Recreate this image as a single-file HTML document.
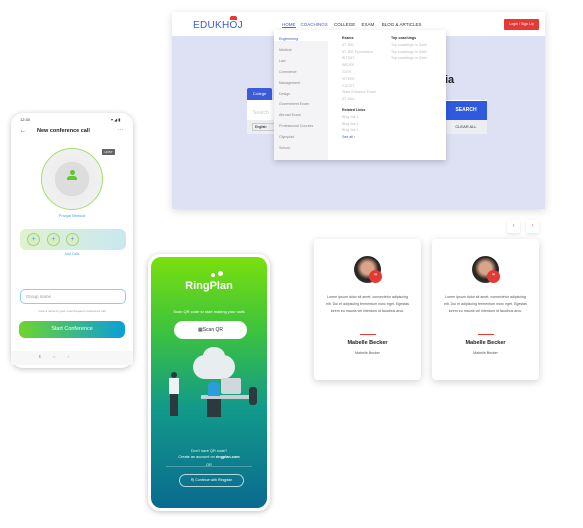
<!DOCTYPE html>
<html><head><meta charset="utf-8"><style>
*{margin:0;padding:0;box-sizing:border-box}
body{width:583px;height:528px;background:#fff;position:relative;overflow:hidden;font-family:"Liberation Sans",sans-serif}
.a{position:absolute}
</style></head><body>

<!-- website -->
<div class="a" style="left:172px;top:12px;width:373px;height:197px;background:#dde1f3;box-shadow:0 2px 8px rgba(0,0,0,.15)">
 <div class="a" style="left:0;top:0;width:373px;height:24px;background:#fff"></div>
 <div class="a" style="left:21px;top:8px;font-size:10px;color:#3b5bd9;letter-spacing:.3px">EDUKHOJ</div>
 <div class="a" style="left:58px;top:4px;width:7px;height:4px;background:#e53935;border-radius:2px 2px 0 0"></div>
 <div class="a" style="left:110px;top:10px;font-size:4.5px;color:#333;white-space:nowrap"><span style="color:#3b5bd9;border-bottom:1px solid #e53935">HOME</span>&nbsp;&nbsp;&nbsp;&nbsp;<span style="color:#3b5bd9">COACHINGS</span>&nbsp;&nbsp;&nbsp;&nbsp;&nbsp;COLLEGE&nbsp;&nbsp;&nbsp;&nbsp;&nbsp;EXAM&nbsp;&nbsp;&nbsp;&nbsp;&nbsp;&nbsp;BLOG &amp; ARTICLES</div>
 <div class="a" style="left:332px;top:7px;width:35px;height:11px;background:#e53935;border-radius:1px;color:#fff;font-size:3.6px;text-align:center;line-height:11px">Login / Sign Up</div>
 <div class="a" style="left:273px;top:62px;font-size:11px;font-weight:bold;color:#222">ia</div>
 <div class="a" style="left:75px;top:76px;width:25px;height:12px;background:#3b5bd9;color:#fff;font-size:4px;line-height:12px;text-align:center;border-radius:2px 2px 0 0">College</div>
 <div class="a" style="left:75px;top:88px;width:240px;height:31px;background:#fff"></div>
 <div class="a" style="left:75px;top:108px;width:240px;height:14px;background:#eceef2"></div>
 <div class="a" style="left:81px;top:98px;font-size:5px;color:#ccc">Search</div>
 <div class="a" style="left:80px;top:111px;width:24px;height:8px;border:1px solid #ccc;font-size:3.5px;line-height:6px;padding-left:2px">English</div>
 <div class="a" style="left:273px;top:89px;width:42px;height:19px;background:#2f5ae0;color:#fff;font-size:5px;font-weight:bold;text-align:center;line-height:19px">SEARCH</div>
 <div class="a" style="left:273px;top:108px;width:42px;height:14px;color:#333;font-size:4px;text-align:center;line-height:14px">CLEAR ALL</div>
 <div class="a" style="left:102px;top:18px;width:172px;height:130px;background:#fff;box-shadow:0 2px 6px rgba(0,0,0,.2)">
  <div class="a" style="left:0;top:0;width:54px;height:130px;background:#f4f4f6"></div>
  <div class="a" style="left:0;top:0;width:54px;height:11px;background:#fff"></div>
  <div class="a" style="left:5px;top:4px;font-size:3.6px;line-height:10.9px;color:#888">
   <div style="color:#3b5bd9">Engineering</div><div>Medical</div><div>Law</div><div>Commerce</div><div>Management</div><div>Design</div><div>Government Exam</div><div>Abroad Exam</div><div>Professional Courses</div><div>Olympiad</div><div>School</div>
  </div>
  <div class="a" style="left:68px;top:5px;font-size:3.6px;line-height:6.8px;color:#bbb"><div style="color:#333;font-weight:bold">Exams</div><div>IIT JEE</div><div>IIT JEE Foundation</div><div>BITSAT</div><div>WBJEE</div><div>GATE</div><div>VITEEE</div><div>CUCET</div><div>State Entrance Exam</div><div>IIT JAM</div><div style="color:#333;font-weight:bold;margin-top:4px">Related Links</div><div>Blog link 1</div><div>Blog link 1</div><div>Blog link 1</div><div style="color:#3b5bd9">See all ›</div></div>
  <div class="a" style="left:117px;top:5px;font-size:3.6px;line-height:6.8px;color:#bbb"><div style="color:#333;font-weight:bold">Top coachings</div><div>Top coachings in Delhi</div><div>Top coachings in Delhi</div><div>Top coachings in Delhi</div></div>
 </div>
</div>

<!-- left phone -->
<div class="a" style="left:11px;top:113px;width:122px;height:255px;background:#fff;border-radius:12px;box-shadow:0 1px 6px rgba(0,0,0,.25)">
 <div class="a" style="left:9px;top:4px;font-size:4px;color:#333">12:30</div>
 <div class="a" style="left:100px;top:4px;font-size:4px;color:#333">▾ ◢ ▮</div>
 <div class="a" style="left:9px;top:15px;font-size:6px;color:#222">←</div>
 <div class="a" style="left:26px;top:15px;font-size:5.5px;font-weight:bold;color:#222">New conference call</div>
 <div class="a" style="left:107px;top:14px;font-size:5px;color:#333">···</div>
 <div class="a" style="left:30px;top:35px;width:62px;height:62px;border-radius:50%;background:radial-gradient(#ddd 40%,#eee 41%,#f3f3f3);border:1px solid #a8dd6a"></div>
 <div class="a" style="left:54px;top:57px;width:14px;height:10px;"><div style="width:5px;height:5px;border-radius:50%;background:#5cc830;margin:0 auto"></div><div style="width:10px;height:4px;border-radius:3px 3px 0 0;background:#5cc830;margin:1px auto 0"></div></div>
 <div class="a" style="left:91px;top:36px;width:13px;height:6px;background:#666;color:#fff;font-size:3px;text-align:center;line-height:6px">HOST</div>
 <div class="a" style="left:0;top:100px;width:122px;text-align:center;font-size:4px;color:#4aa8e0">Pranjal Bhasoli</div>
 <div class="a" style="left:9px;top:116px;width:106px;height:21px;border-radius:6px;background:linear-gradient(90deg,#dff2cf,#c9e7f2)"></div>
 <div class="a" style="left:16px;top:120px;width:13px;height:13px;border-radius:50%;border:1px solid #a6d07c;background:#d8efc6;color:#3fa0d8;font-size:7px;text-align:center;line-height:11px">+</div>
 <div class="a" style="left:36px;top:120px;width:13px;height:13px;border-radius:50%;border:1px solid #a6d07c;background:#d8efc6;color:#3fa0d8;font-size:7px;text-align:center;line-height:11px">+</div>
 <div class="a" style="left:55px;top:120px;width:13px;height:13px;border-radius:50%;border:1px solid #a6d07c;background:#d8efc6;color:#3fa0d8;font-size:7px;text-align:center;line-height:11px">+</div>
 <div class="a" style="left:0;top:139px;width:122px;text-align:center;font-size:3.5px;color:#4aa8e0">Add Calls</div>
 <div class="a" style="left:9px;top:176px;width:106px;height:15px;border:1px solid #8fd0e8;border-radius:5px;font-size:4.5px;color:#999;padding:4px 5px">Group name</div>
 <div class="a" style="left:0;top:196px;width:122px;text-align:center;font-size:3px;color:#999">Give a name to your most frequent conference call</div>
 <div class="a" style="left:8px;top:208px;width:106px;height:17px;border-radius:6px;background:linear-gradient(90deg,#6ed42f,#0a9fd6);color:#fff;font-size:5.5px;text-align:center;line-height:17px">Start Conference</div>
 <div class="a" style="left:0;top:238px;width:122px;height:14px;background:#f7f7f7"></div>
 <div class="a" style="left:28px;top:241px;font-size:4px;color:#888">⦀&nbsp;&nbsp;&nbsp;&nbsp;&nbsp;&nbsp;&nbsp;&nbsp;&nbsp;&nbsp;&nbsp;○&nbsp;&nbsp;&nbsp;&nbsp;&nbsp;&nbsp;&nbsp;&nbsp;&nbsp;&nbsp;&nbsp;‹</div>
</div>

<!-- ringplan phone -->
<div class="a" style="left:148px;top:254px;width:122px;height:257px;background:#fff;border-radius:12px;box-shadow:0 1px 6px rgba(0,0,0,.25)">
 <div class="a" style="left:3px;top:3px;width:116px;height:251px;border-radius:10px;background:linear-gradient(180deg,#7ae00d 0%,#3cc23f 30%,#129a8a 60%,#0a6a8f 100%)">
  <div class="a" style="left:0;top:23px;width:116px;text-align:center;font-size:11px;font-weight:bold;color:#fff">RingPlan</div>
  <div class="a" style="left:60px;top:16px;width:4px;height:4px;border-radius:50%;background:#fff"></div>
  <div class="a" style="left:67px;top:14px;width:5px;height:5px;border-radius:50%;background:#fff"></div>
  <div class="a" style="left:0;top:52px;width:116px;text-align:center;font-size:4px;color:#fff">Scan QR code to start making your calls</div>
  <div class="a" style="left:23px;top:64px;width:73px;height:18px;border-radius:9px;background:#fff;font-size:5px;color:#333;text-align:center;line-height:18px">▦Scan QR</div>
  <div class="a" style="left:42px;top:98px;width:42px;height:24px;border-radius:12px;background:#e8eef0"></div>
  <div class="a" style="left:52px;top:90px;width:22px;height:18px;border-radius:50%;background:#e8eef0"></div>
  <div class="a" style="left:20px;top:115px;width:6px;height:6px;border-radius:50%;background:#2a3a40"></div>
  <div class="a" style="left:18px;top:121px;width:10px;height:16px;background:#eef2f4"></div>
  <div class="a" style="left:19px;top:137px;width:8px;height:22px;background:#2b3a3f"></div>
  <div class="a" style="left:50px;top:138px;width:50px;height:4px;background:#c6cfd4"></div>
  <div class="a" style="left:70px;top:121px;width:20px;height:16px;background:#cfd8dc;border-radius:2px"></div>
  <div class="a" style="left:57px;top:125px;width:12px;height:14px;background:#2c9dd8;border-radius:4px 4px 0 0"></div>
  <div class="a" style="left:56px;top:142px;width:14px;height:18px;background:#2b3a3f"></div>
  <div class="a" style="left:98px;top:130px;width:8px;height:18px;background:#2b3a3f;border-radius:3px"></div>
  <div class="a" style="left:0;top:191px;width:116px;text-align:center;font-size:3.8px;color:#dfe;line-height:6px">Don't have QR code?<br><span style="color:#fff">Create an account on <b>ringplan.com</b></span></div>
  <div class="a" style="left:15px;top:209px;width:86px;height:1px;background:rgba(255,255,255,.25)"></div>
  <div class="a" style="left:0;top:206px;width:116px;text-align:center;font-size:3.8px;color:#dfe">OR</div>
  <div class="a" style="left:28px;top:217px;width:65px;height:13px;border:1px solid rgba(255,255,255,.7);border-radius:7px;font-size:3.6px;color:#fff;text-align:center;line-height:11px">R| Continue with Ringplan</div>
 </div>
</div>

<!-- cards -->
<div class="a" style="left:507px;top:220px;width:13px;height:13px;background:#fff;border-radius:2px;box-shadow:0 1px 3px rgba(0,0,0,.12);color:#e66;font-size:6px;text-align:center;line-height:13px">‹</div>
<div class="a" style="left:526px;top:220px;width:13px;height:13px;background:#fff;border-radius:2px;box-shadow:0 1px 3px rgba(0,0,0,.12);color:#e66;font-size:6px;text-align:center;line-height:13px">›</div>

<div class="a" style="left:314px;top:239px;width:107px;height:141px;background:#fff;border-radius:4px;box-shadow:0 2px 8px rgba(0,0,0,.18)">
 <div class="a" style="left:40px;top:17px;width:27px;height:27px;border-radius:50%;background:radial-gradient(circle at 50% 45%,#d9a58a 30%,#2b2320 55%,#1e5250)"></div>
 <div class="a" style="left:55px;top:31px;width:13px;height:13px;border-radius:50%;background:#e53935;color:#fff;font-size:6px;text-align:center;line-height:14px;font-weight:bold">"</div>
 <div class="a" style="left:10px;top:55px;width:87px;text-align:center;font-size:3.6px;line-height:6.8px;color:#555">Lorem ipsum dolor sit amet, consectetur adipiscing elit. Dui et adipiscing fermentum nunc eget. Egestas lorem eu mauris vel interdum id faucibus arcu.</div>
 <div class="a" style="left:46px;top:95px;width:16px;height:1px;background:#e53935"></div>
 <div class="a" style="left:0;top:101px;width:107px;text-align:center;font-size:5.5px;font-weight:bold;color:#222">Mabelle Becker</div>
 <div class="a" style="left:0;top:112px;width:107px;text-align:center;font-size:3.6px;color:#555">Mabelle Becker</div>
</div>
<div class="a" style="left:432px;top:239px;width:107px;height:141px;background:#fff;border-radius:4px;box-shadow:0 2px 8px rgba(0,0,0,.18)">
 <div class="a" style="left:40px;top:17px;width:27px;height:27px;border-radius:50%;background:radial-gradient(circle at 50% 45%,#d9a58a 30%,#2b2320 55%,#1e5250)"></div>
 <div class="a" style="left:55px;top:31px;width:13px;height:13px;border-radius:50%;background:#e53935;color:#fff;font-size:6px;text-align:center;line-height:14px;font-weight:bold">"</div>
 <div class="a" style="left:10px;top:55px;width:87px;text-align:center;font-size:3.6px;line-height:6.8px;color:#555">Lorem ipsum dolor sit amet, consectetur adipiscing elit. Dui et adipiscing fermentum nunc eget. Egestas lorem eu mauris vel interdum id faucibus arcu.</div>
 <div class="a" style="left:46px;top:95px;width:16px;height:1px;background:#e53935"></div>
 <div class="a" style="left:0;top:101px;width:107px;text-align:center;font-size:5.5px;font-weight:bold;color:#222">Mabelle Becker</div>
 <div class="a" style="left:0;top:112px;width:107px;text-align:center;font-size:3.6px;color:#555">Mabelle Becker</div>
</div>
</body></html>
